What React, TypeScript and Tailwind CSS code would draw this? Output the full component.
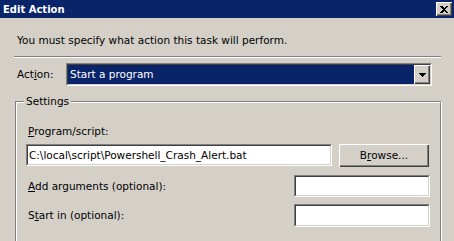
import React from "react";

const sunken =
  "border border-t-[#808080] border-l-[#808080] border-b-white border-r-white";
const sunkenInner =
  "border border-t-[#404040] border-l-[#404040] border-b-[#D4D0C8] border-r-[#D4D0C8]";
const raised =
  "shadow-[inset_1px_1px_#ffffff,inset_-1px_-1px_#404040,inset_-2px_-2px_#808080]";

function TextBox({ value, className }: { value?: string; className: string }) {
  return (
    <div className={`${sunken} ${className}`}>
      <div className={`${sunkenInner} h-full bg-white pl-[1px] flex items-center whitespace-nowrap overflow-hidden`}>
        {value}
      </div>
    </div>
  );
}

const App = () => {
  return (
    <div className="w-[454px] h-[241px] overflow-hidden bg-[#D4D0C8] text-black text-[10.5px] leading-[13px] font-['DejaVu_Sans',Verdana,sans-serif]">
      {/* title bar */}
      <div className="h-[18px] bg-[#0A246A] flex items-center justify-between pl-[3px] pr-[2px]">
        <span className="text-white font-bold text-[10px]">Edit Action</span>
        <div className={`w-[16px] h-[14px] bg-[#D4D0C8] flex items-center justify-center ${raised}`}>
          <svg width="8" height="7" viewBox="0 0 8 7" shapeRendering="crispEdges">
            <path d="M0 0h2l2 2 2-2h2L5 3.5 8 7H6L4 5 2 7H0l3-3.5z" fill="#000" />
          </svg>
        </div>
      </div>

      <p className="mt-[16px] pl-[17px]">You must specify what action this task will perform.</p>

      <div className="mt-[9px] ml-[14px] w-[427px] h-[2px] border-t border-t-[#808080] border-b border-b-white" />

      {/* action combo */}
      <div className="mt-[5px] pl-[17px] flex items-center">
        <span className="w-[49px]">
          Act<u>i</u>on:
        </span>
        <div className={`${sunken} w-[366px] h-[23px]`}>
          <div className={`${sunkenInner} h-full flex bg-white`}>
            <div className="flex-1 bg-[#0A246A] text-white pl-[2px] flex items-center">Start a program</div>
            <div className={`w-[16px] bg-[#D4D0C8] flex items-center justify-center ${raised}`}>
              <svg width="7" height="4" viewBox="0 0 7 4" shapeRendering="crispEdges">
                <path d="M0 0h7v1H6v1H5v1H4v1H3V3H2V2H1V1H0z" fill="#000" />
              </svg>
            </div>
          </div>
        </div>
      </div>

      {/* settings group */}
      <div className="relative mt-[15px] ml-[15px] w-[427px] h-[160px] border border-t-[#808080] border-l-[#808080] border-b-white border-r-white">
        <span className="absolute left-[8px] top-[-7px] px-[2px] bg-[#D4D0C8]">Settings</span>
        <div className="h-full border border-t-white border-l-white border-b-[#808080] border-r-[#808080] pt-[22px] pl-[9px] pr-[10px]">
          <div className="ml-[2px]">
            <u>P</u>rogram/script:
          </div>
          <div className="mt-[6px] flex items-start gap-[7px]">
            <TextBox value="C:\local\script\Powershell_Crash_Alert.bat" className="w-[306px] h-[22px]" />
            <button className={`w-[90px] h-[23px] bg-[#D4D0C8] ${raised}`}>
              B<u>r</u>owse...
            </button>
          </div>

          <div className="mt-[8px] flex items-center justify-between">
            <span className="ml-[2px]">
              <u>A</u>dd arguments (optional):
            </span>
            <TextBox className="w-[136px] h-[22px]" />
          </div>

          <div className="mt-[7px] flex items-center justify-between">
            <span className="ml-[2px]">
              S<u>t</u>art in (optional):
            </span>
            <TextBox className="w-[136px] h-[23px]" />
          </div>
        </div>
      </div>
    </div>
  );
};

export default App;
